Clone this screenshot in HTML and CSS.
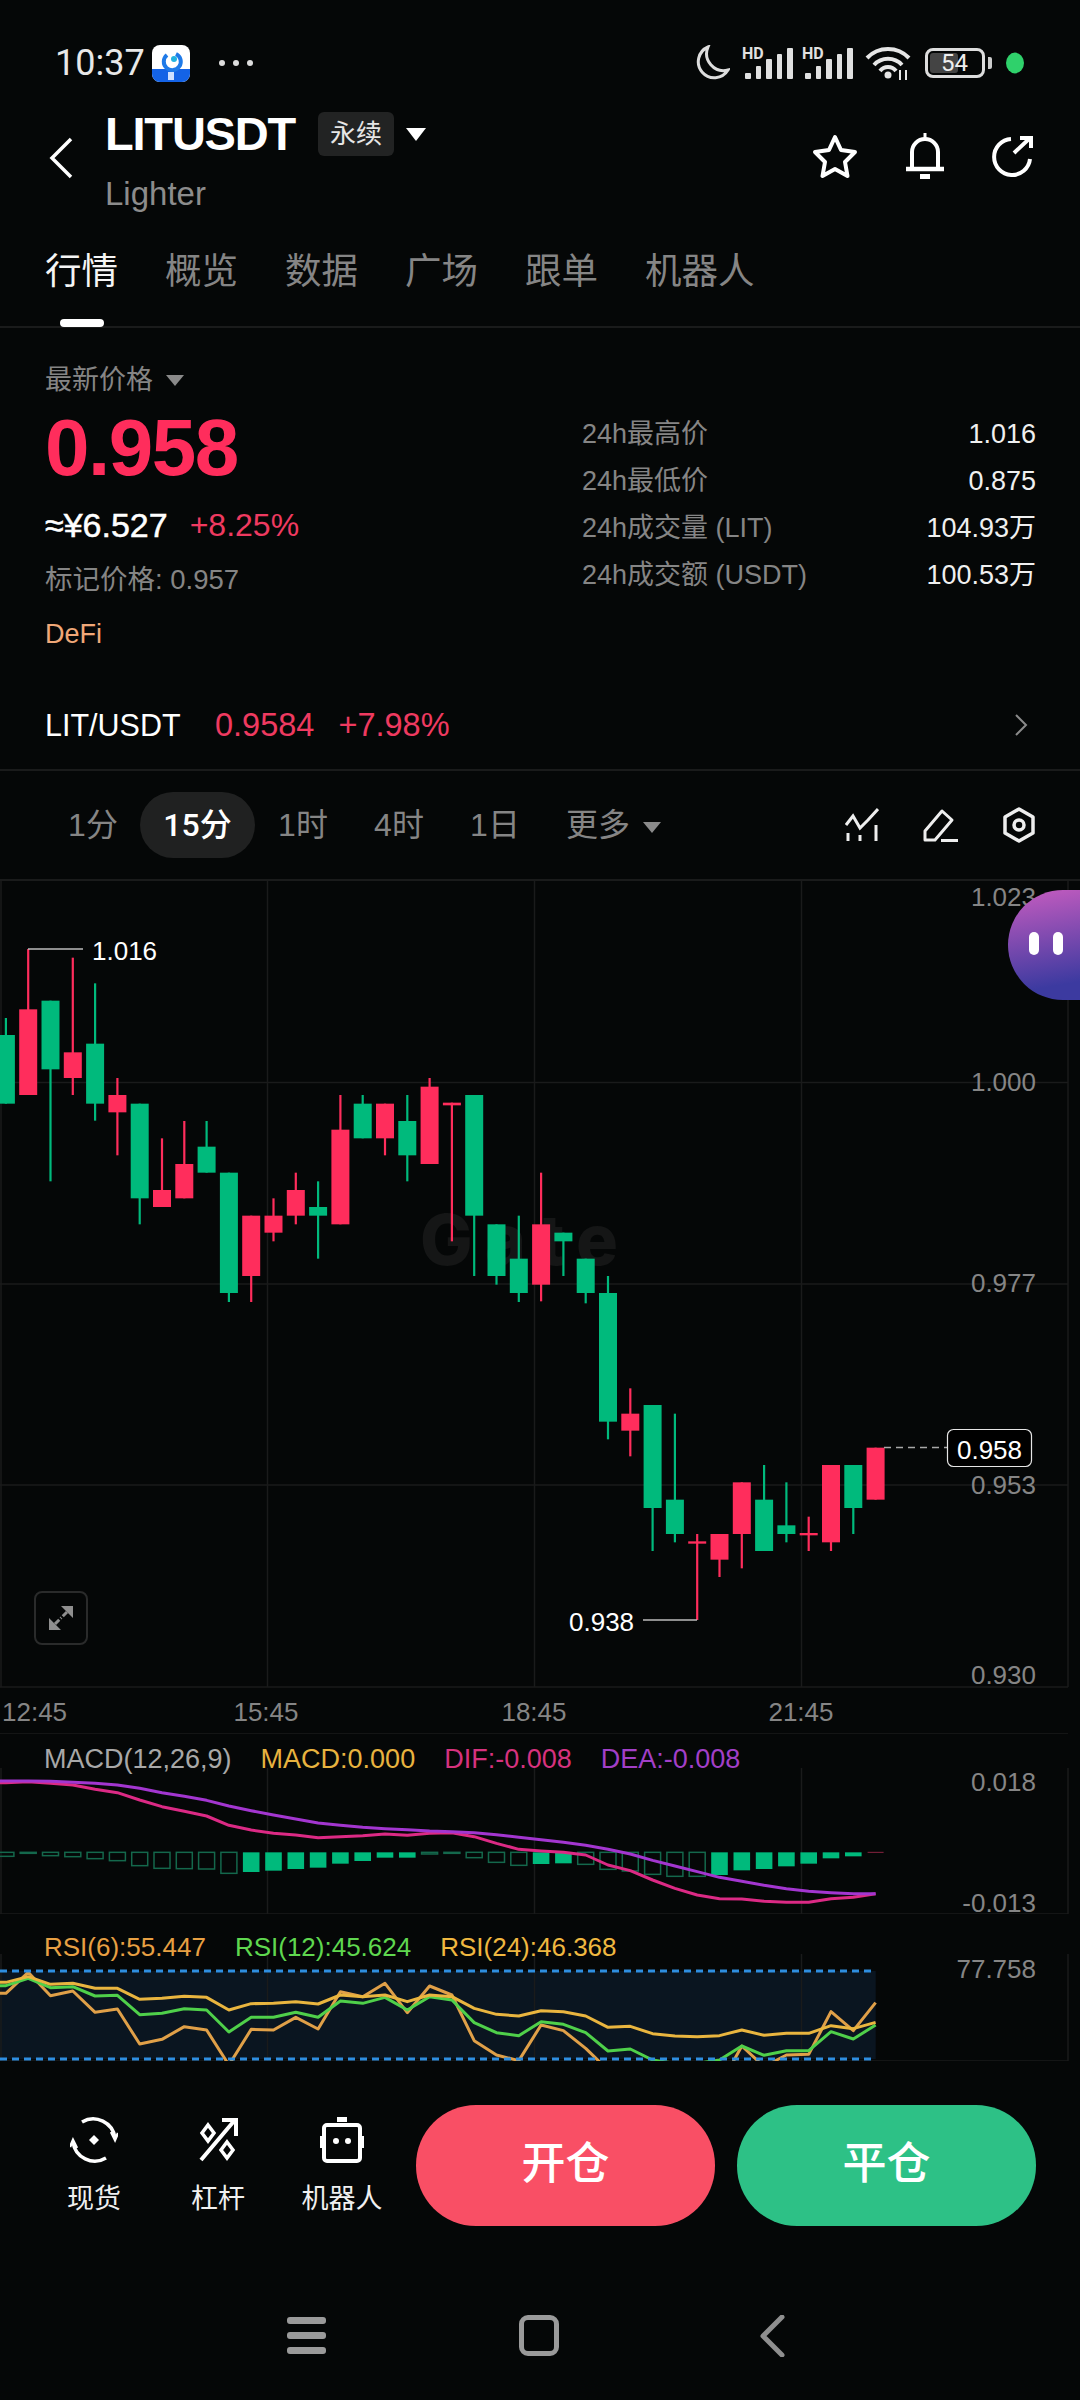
FILE: index.html
```html
<!DOCTYPE html>
<html>
<head>
	<title>LITUSDT</title>
	<meta name="viewport" content="width=device-width, initial-scale=1.0">
	<meta http-equiv="Content-Type" content="text/html; charset=UTF-8">
	<link rel="stylesheet" href="styles.css">
</head>
<body>
	<div id="status-bar">
		<span id="clock">10:37</span>
		<svg class="app-icon" width="38" height="37" viewBox="0 0 38 37">
			<rect width="38" height="37" rx="8" fill="#fff"/>
			<path d="M0 24H38V29a8 8 0 0 1-8 8H8a8 8 0 0 1-8-8Z" fill="#1463e6"/>
			<path d="M24 9a8.500 8.500 0 1 1-9 1" fill="none" stroke="#1f7ae8" stroke-width="4"/>
			<circle cx="22" cy="14" r="3" fill="#23b3e0"/>
			<rect x="16" y="27" width="6" height="8" fill="#cfe0ff"/>
		</svg>
		<span id="dots"><i></i><i></i><i></i></span>
		<span class="grow"></span>
		<svg class="moon" width="36" height="36" viewBox="0 0 36 36">
			<path d="M14 2A16 16 0 1 0 34 25 A17 17 0 0 1 14 2Z" fill="none" stroke="#ddd" stroke-width="3"/>
		</svg>
		<span class="signal">
			<span class="hd">HD</span>
			<i style="height:6px"></i><i style="height:13px"></i><i style="height:20px"></i><i style="height:25px"></i><i style="height:31px"></i>
		</span>
		<span class="signal">
			<span class="hd">HD</span>
			<i style="height:6px"></i><i style="height:13px"></i><i style="height:20px"></i><i style="height:25px"></i><i style="height:31px"></i>
		</span>
		<svg class="wifi" width="46" height="34" viewBox="0 0 46 34">
			<path d="M2 12A29 29 0 0 1 44 12M9 19A19 19 0 0 1 37 19M15 25A10 10 0 0 1 31 25" fill="none" stroke="#e6e6e6" stroke-width="4"/>
			<circle cx="23" cy="29" r="3.500" fill="#e6e6e6"/>
			<path d="M35 24V34M41 24V34" stroke="#e6e6e6" stroke-width="2"/>
		</svg>
		<span id="battery"><span id="battery-fill"></span><span id="battery-num">54</span></span>
		<span id="battery-cap"></span>
		<span id="green-dot"></span>
	</div>

	<div id="header">
		<svg class="back" width="26" height="42" viewBox="0 0 26 42">
			<path d="M23 2L4 21L23 40" fill="none" stroke="#fff" stroke-width="3.500"/>
		</svg>
		<div id="title-col">
			<div id="title-row">
				<span id="symbol">LITUSDT</span>
				<span id="tag">永续</span>
				<span class="caret caret-white"></span>
			</div>
			<div id="subtitle">Lighter</div>
		</div>
		<span class="grow"></span>
		<div id="actions">
			<svg width="46" height="46" viewBox="0 0 46 46">
				<path d="M23 4L29 17L43 19L33 29L35.500 43L23 36L10.500 43L13 29L3 19L17 17Z" fill="none" stroke="#fff" stroke-width="4" stroke-linejoin="round"/>
			</svg>
			<svg width="42" height="46" viewBox="0 0 42 46">
				<path d="M8 36V19a13 13 0 0 1 26 0V36" fill="none" stroke="#fff" stroke-width="4"/>
				<path d="M2 36H40" stroke="#fff" stroke-width="4.500"/>
				<path d="M21 0V5" stroke="#fff" stroke-width="3"/>
				<rect x="16" y="41" width="10" height="5" fill="#fff"/>
			</svg>
			<svg width="42" height="42" viewBox="0 0 42 42">
				<path d="M19 4A18 18 0 1 0 38 24" fill="none" stroke="#fff" stroke-width="4"/>
				<path d="M22 18L38 3M28 3H39V13" fill="none" stroke="#fff" stroke-width="4"/>
			</svg>
		</div>
	</div>

	<div id="tabs">
		<span class="tab tab-active">行情</span>
		<span class="tab">概览</span>
		<span class="tab">数据</span>
		<span class="tab">广场</span>
		<span class="tab">跟单</span>
		<span class="tab">机器人</span>
	</div>

	<div id="price-block">
		<div id="price-left">
			<div class="price-type">最新价格<span class="caret caret-grey"></span></div>
			<div id="last-price">0.958</div>
			<div id="cny-row"><span id="cny">≈¥6.527</span><span id="change">+8.25%</span></div>
			<div id="mark-price">标记价格: 0.957</div>
			<div id="sector">DeFi</div>
		</div>
		<div id="price-right">
			<div class="stat"><span>24h最高价</span><b>1.016</b></div>
			<div class="stat"><span>24h最低价</span><b>0.875</b></div>
			<div class="stat"><span>24h成交量 (LIT)</span><b>104.93万</b></div>
			<div class="stat"><span>24h成交额 (USDT)</span><b>100.53万</b></div>
		</div>
	</div>

	<div id="pair-row">
		<span id="pair">LIT/USDT</span>
		<span class="pair-num">0.9584</span>
		<span class="pair-num">+7.98%</span>
		<span class="grow"></span>
		<svg width="14" height="22" viewBox="0 0 14 22">
			<path d="M2 1L12 11L2 21" fill="none" stroke="#8a8a8a" stroke-width="2"/>
		</svg>
	</div>

	<div id="interval-row">
		<span class="interval">1分</span>
		<span class="interval interval-active">15分</span>
		<span class="interval">1时</span>
		<span class="interval">4时</span>
		<span class="interval">1日</span>
		<span class="interval interval-more">更多<span class="caret caret-grey"></span></span>
		<span class="grow"></span>
		<div id="tools">
			<svg width="34" height="34" viewBox="0 0 34 34">
				<path d="M1 17L8 8L15 20L23 12L33 1" fill="none" stroke="#eee" stroke-width="3"/>
				<path d="M3 25V33M15 27V33M31 17V33" stroke="#eee" stroke-width="3"/>
			</svg>
			<svg width="36" height="34" viewBox="0 0 36 34">
				<path d="M2 32V23L19 3L29 12L12 32Z" fill="none" stroke="#eee" stroke-width="3" stroke-linejoin="round"/>
				<path d="M18 32.500H35" stroke="#eee" stroke-width="3"/>
			</svg>
			<svg width="32" height="36" viewBox="0 0 32 36">
				<path d="M16 2L30 10V26L16 34L2 26V10Z" fill="none" stroke="#eee" stroke-width="3.500" stroke-linejoin="round"/>
				<circle cx="16" cy="18" r="5" fill="none" stroke="#eee" stroke-width="3.500"/>
			</svg>
		</div>
	</div>

	<div id="chart">
		<div id="main-pane" class="pane">
			<svg id="main-svg" class="pane-svg" width="1080" height="852" viewBox="0 881 1080 852"></svg>
			<div id="expand">
				<svg width="26" height="26" viewBox="0 0 26 26">
					<path d="M13 1H25V13Z M1 13V25H13Z" fill="#8f8f8f"/>
					<path d="M19 7L13 13M7 19L13 13" stroke="#8f8f8f" stroke-width="3" stroke-dasharray="6 2"/>
				</svg>
			</div>
			<div id="assistant"><i></i><i></i></div>
		</div>
		<div id="macd-pane" class="pane">
			<svg id="macd-svg" class="pane-svg" width="1080" height="181" viewBox="0 1733 1080 181"></svg>
			<div class="legend">
				<span class="c-grey">MACD(12,26,9)</span>
				<span class="c-yellow">MACD:0.000</span>
				<span class="c-pink">DIF:-0.008</span>
				<span class="c-purple">DEA:-0.008</span>
			</div>
		</div>
		<div id="rsi-pane" class="pane">
			<svg id="rsi-svg" class="pane-svg" width="1080" height="147" viewBox="0 1914 1080 147"></svg>
			<div class="legend">
				<span class="c-orange">RSI(6):55.447</span>
				<span class="c-green">RSI(12):45.624</span>
				<span class="c-gold">RSI(24):46.368</span>
			</div>
		</div>
	</div>

	<div id="action-bar">
		<div class="shortcut">
			<svg width="48" height="48" viewBox="0 0 48 48">
				<path d="M12 6A22 22 0 0 1 45 22M36 42A22 22 0 0 1 3 26" fill="none" stroke="#fff" stroke-width="3.500"/>
				<path d="M41 16L45 24L48 17M7 32L3 24L0 31" fill="none" stroke="#fff" stroke-width="2.500"/>
				<path d="M24 19L29 24L24 29L19 24Z" fill="#fff"/>
			</svg>
			<span>现货</span>
		</div>
		<div class="shortcut">
			<svg width="48" height="48" viewBox="0 0 48 48">
				<path d="M7 44L40 5M28 4H42V20" fill="none" stroke="#fff" stroke-width="4"/>
				<path d="M14 9L20 17L14 25L8 17Z M33 26L39 34L33 42L27 34Z" fill="none" stroke="#fff" stroke-width="3.500"/>
			</svg>
			<span>杠杆</span>
		</div>
		<div class="shortcut">
			<svg width="48" height="48" viewBox="0 0 48 48">
				<rect x="6" y="9" width="36" height="36" rx="3" fill="none" stroke="#fff" stroke-width="4"/>
				<rect x="19" y="1" width="10" height="5" fill="#fff"/>
				<rect x="2" y="20" width="4" height="12" fill="#fff"/>
				<rect x="42" y="20" width="4" height="12" fill="#fff"/>
				<circle cx="18" cy="25" r="3" fill="#fff"/>
				<circle cx="30" cy="25" r="3" fill="#fff"/>
			</svg>
			<span>机器人</span>
		</div>
		<div id="trade-buttons">
			<div class="trade-btn open-btn">开仓</div>
			<div class="trade-btn close-btn">平仓</div>
		</div>
	</div>

	<div id="nav-bar">
		<span id="nav-menu"><i></i><i></i><i></i></span>
		<span id="nav-home"></span>
		<svg width="26" height="42" viewBox="0 0 26 42">
			<path d="M23 2L4 21L23 40" fill="none" stroke="#8f8f8f" stroke-width="5" stroke-linecap="round" stroke-linejoin="round"/>
		</svg>
	</div>

	<script src="chart.js"></script>
</body>
</html>
```

FILE: styles.css
```css
* {
	box-sizing: border-box;
}
html, body {
	margin: 0;
	padding: 0;
}
body {
	width: 1080px;
	height: 2400px;
	overflow: hidden;
	background: #050707;
	color: #fff;
	font-family: "Liberation Sans", "Noto Sans CJK SC", sans-serif;
}
svg {
	display: block;
	flex: none;
}
.grow {
	flex: 1;
}

/* status bar */
#status-bar {
	height: 100px;
	padding: 26px 56px 0 55px;
	display: flex;
	align-items: center;
}
#clock {
	font-family: Roboto, sans-serif;
	font-size: 36px;
	color: #e8e8e8;
	width: 97px;
}
#dots {
	display: flex;
	gap: 8px;
	margin-left: 29px;
}
#dots i {
	width: 6px;
	height: 6px;
	border-radius: 50%;
	background: #ddd;
}
.moon {
	margin-right: 3px;
}
.signal {
	position: relative;
	width: 50px;
	height: 32px;
	margin-left: 10px;
	display: flex;
	align-items: flex-end;
	gap: 5px;
	padding-left: 2px;
}
.signal i {
	width: 6px;
	background: #e0e0e0;
	border-radius: 1px;
}
.hd {
	position: absolute;
	top: -3px;
	left: -1px;
	font-family: Roboto, sans-serif;
	font-size: 16px;
	font-weight: 700;
	color: #e0e0e0;
}
.wifi {
	margin-left: 12px;
}
#battery {
	position: relative;
	width: 60px;
	height: 30px;
	margin-left: 14px;
	border: 3px solid #ddd;
	border-radius: 8px;
}
#battery-fill {
	position: absolute;
	top: 2px;
	bottom: 2px;
	left: 2px;
	width: 28px;
	background: #444;
	border-radius: 3px;
}
#battery-num {
	position: absolute;
	top: -3px;
	left: 13px;
	font-family: Roboto, sans-serif;
	font-size: 24px;
	line-height: 30px;
	color: #eee;
}
#battery-cap {
	width: 4px;
	height: 12px;
	margin-left: 3px;
	background: #ccc;
	border-radius: 0 2px 2px 0;
}
#green-dot {
	width: 18px;
	height: 26px;
	margin-left: 14px;
	border-radius: 50%;
	background: #2fd16b;
	transform: scaleY(0.8);
}

/* header */
#header {
	height: 122px;
	padding: 12px 46px 0 48px;
	display: flex;
	position: relative;
}
.back {
	margin-top: 25px;
}
#title-col {
	margin-left: 31px;
}
#title-row {
	height: 44px;
	display: flex;
	align-items: center;
}
#symbol {
	font-size: 47px;
	font-weight: 700;
	letter-spacing: -1.200px;
	line-height: 44px;
}
#tag {
	margin-left: 23px;
	width: 76px;
	height: 44px;
	background: #222323;
	border-radius: 6px;
	font-size: 26px;
	line-height: 44px;
	text-align: center;
	color: #e6e6e6;
}
.caret {
	display: inline-block;
	width: 0;
	height: 0;
	border-left: 9px solid transparent;
	border-right: 9px solid transparent;
}
.caret-white {
	margin-left: 12px;
	border-left-width: 10px;
	border-right-width: 10px;
	border-top: 13px solid #fff;
}
.caret-grey {
	margin-left: 13px;
	border-top: 11px solid #8a8a8a;
	vertical-align: 3px;
}
#subtitle {
	margin-top: 18px;
	font-size: 33px;
	line-height: 40px;
	color: #8c8c8c;
}
#actions {
	display: flex;
	align-items: center;
	gap: 46px;
	height: 46px;
	margin-top: 21px;
}

/* tabs */
#tabs {
	height: 106px;
	padding: 24px 0 0 45px;
	display: flex;
	gap: 47px;
	border-bottom: 2px solid #1a1b1b;
}
.tab {
	position: relative;
	font-size: 36.500px;
	line-height: 52px;
	height: 52px;
	color: #858585;
}
.tab-active {
	color: #f5f5f5;
}
.tab-active::after {
	content: "";
	position: absolute;
	left: 15px;
	top: 73px;
	width: 44px;
	height: 8px;
	border-radius: 4px;
	background: #fff;
}

/* price block */
#price-block {
	height: 353px;
	padding: 0 44px 0 45px;
	display: flex;
}
#price-left {
	width: 537px;
	padding-top: 33px;
}
.price-type {
	font-size: 27px;
	line-height: 38px;
	color: #858585;
}
#last-price {
	margin-top: 9px;
	font-size: 80px;
	line-height: 80px;
	font-weight: 700;
	letter-spacing: -1.500px;
	color: #ff2d5c;
}
#cny-row {
	margin-top: 17px;
	height: 40px;
	line-height: 40px;
	font-size: 32px;
	display: flex;
	gap: 22px;
}
#cny {
	font-size: 34px;
	-webkit-text-stroke: 0.5px #fff;
}
#change {
	color: #ef3a60;
}
#mark-price {
	margin-top: 15px;
	font-size: 27.500px;
	line-height: 40px;
	color: #858585;
}
#sector {
	margin-top: 14px;
	font-size: 27px;
	line-height: 40px;
	color: #f0a878;
}
#price-right {
	flex: 1;
	padding-top: 83px;
}
.stat {
	height: 47px;
	line-height: 47px;
	font-size: 27px;
	display: flex;
	justify-content: space-between;
	color: #858585;
}
.stat b {
	font-weight: 400;
	color: #f0f0f0;
}

/* pair row */
#pair-row {
	height: 90px;
	padding: 0 52px 0 45px;
	display: flex;
	align-items: center;
	font-size: 30.500px;
	border-bottom: 2px solid #1a1b1b;
}
#pair {
	width: 170px;
}
.pair-num {
	font-size: 32.500px;
	color: #ef3a60;
	margin-right: 24px;
}

/* interval row */
#interval-row {
	height: 110px;
	padding: 0 45px 0 0;
	display: flex;
	align-items: center;
	border-bottom: 2px solid #1a1b1b;
}
.interval {
	width: 96px;
	height: 66px;
	line-height: 66px;
	text-align: center;
	font-size: 32px;
	color: #858585;
}
.interval:first-child {
	width: 94px;
	margin-left: 46px;
}
.interval-active {
	width: 115px;
	font-family: Roboto, "Noto Sans CJK SC", sans-serif;
	color: #fff;
	font-weight: 500;
	background: #202121;
	border-radius: 33px;
}
.interval-more {
	width: auto;
	margin-left: 23px;
	white-space: nowrap;
}
#tools {
	display: flex;
	align-items: center;
	gap: 44px;
}

/* chart */
#chart {
	height: 1180px;
}
.pane {
	position: relative;
}
#main-pane {
	height: 852px;
}
#macd-pane {
	height: 181px;
}
#rsi-pane {
	height: 147px;
}
.pane-svg {
	position: absolute;
	top: 0;
	left: 0;
}
.pane-svg text {
	font-family: "Liberation Sans", sans-serif;
	font-size: 26px;
	fill: #858585;
}
.pane-svg .num-white {
	fill: #fff;
}
.pane-svg .watermark {
	font-family: Inter, sans-serif;
	font-size: 70px;
	font-weight: 800;
	letter-spacing: 12px;
	fill: #151616;
}
.legend {
	position: absolute;
	top: 13px;
	left: 44px;
	display: flex;
	gap: 29px;
	font-size: 27px;
	line-height: 26px;
}
#rsi-pane .legend {
	top: 20px;
	font-size: 26px;
}
.c-grey { color: #a8a8a8; }
.c-yellow { color: #e8b33f; }
.c-pink { color: #d6327e; }
.c-purple { color: #a23fc8; }
.c-orange { color: #e8a043; }
.c-green { color: #5fd84f; }
.c-gold { color: #f0b840; }
#expand {
	position: absolute;
	left: 34px;
	top: 710px;
	width: 54px;
	height: 54px;
	border: 2px solid #2a2b2b;
	border-radius: 8px;
	display: flex;
	align-items: center;
	justify-content: center;
}
#assistant {
	position: absolute;
	right: 0;
	top: 9px;
	width: 72px;
	height: 110px;
	border-radius: 55px 0 0 55px;
	background: linear-gradient(170deg, #c65cc0, #3c3aa0 85%);
	display: flex;
	gap: 14px;
	padding: 42px 0 0 21px;
}
#assistant i {
	width: 10px;
	height: 23px;
	border-radius: 5px;
	background: #fff;
}

/* bottom action bar */
#action-bar {
	height: 180px;
	padding: 44px 44px 0 32px;
	display: flex;
}
.shortcut {
	display: flex;
	flex-direction: column;
	align-items: center;
	width: 124px;
	font-size: 27px;
	padding-top: 11px;
}
.shortcut span {
	margin-top: 16px;
	line-height: 38px;
	color: #f0f0f0;
}
#trade-buttons {
	display: flex;
	gap: 22px;
	margin-left: 12px;
}
.trade-btn {
	width: 299px;
	height: 121px;
	border-radius: 60px;
	line-height: 118px;
	text-align: center;
	font-size: 44px;
	font-weight: 500;
}
.open-btn {
	background: #f94f65;
}
.close-btn {
	background: #2dc186;
}

/* nav bar */
#nav-bar {
	height: 159px;
	padding: 74px 0 0 287px;
	display: flex;
	align-items: flex-start;
}
#nav-menu {
	display: flex;
	flex-direction: column;
	gap: 8px;
	width: 39px;
	margin-top: 2px;
}
#nav-menu i {
	height: 7px;
	border-radius: 3px;
	background: #9a9a9a;
}
#nav-home {
	width: 40px;
	height: 41px;
	margin-left: 193px;
	border: 5px solid #9a9a9a;
	border-radius: 9px;
}
#nav-bar svg {
	margin-left: 200px;
}
```

FILE: chart.js
```js
// positions below were measured in a 3x crop, so y = 880 + p / 3
function py(p) {
	return 880 + p / 3;
}
function cx(i) {
	return 5.9 + 22.3 * i;
}

const GREEN = "#00ba7c";
const RED = "#ff2d5c";

// [high, bodyTop, bodyBottom, low, colour]
const CANDLES = [
	[414, 465, 671, 671, GREEN], [207, 388, 645, 645, RED], [362, 362, 568, 904, GREEN], [233, 517, 594, 645, RED],
	[310, 491, 671, 722, GREEN], [594, 645, 697, 826, RED], [671, 671, 955, 1033, GREEN], [775, 930, 981, 981, RED],
	[723, 852, 955, 955, RED], [723, 800, 878, 878, GREEN], [878, 878, 1239, 1266, GREEN], [1007, 1007, 1188, 1266, RED],
	[955, 1007, 1058, 1084, RED], [878, 930, 1007, 1033, RED], [904, 981, 1007, 1136, GREEN], [645, 749, 1033, 1033, RED],
	[645, 671, 775, 775, GREEN], [671, 671, 775, 826, RED], [645, 723, 826, 904, GREEN], [594, 620, 852, 852, RED],
	[668, 668, 676, 1084, RED], [645, 645, 1007, 1188, GREEN], [1033, 1033, 1188, 1214, GREEN], [1007, 1136, 1239, 1266, GREEN],
	[878, 1033, 1214, 1264, RED], [1058, 1058, 1084, 1188, GREEN], [1136, 1136, 1239, 1270, GREEN], [1188, 1239, 1625, 1678, GREEN],
	[1525, 1601, 1652, 1729, RED], [1575, 1575, 1884, 2013, GREEN], [1601, 1859, 1962, 1987, GREEN], [1962, 1984, 1991, 2220, RED],
	[1962, 1962, 2039, 2091, RED], [1807, 1807, 1962, 2065, RED], [1755, 1859, 2013, 2013, GREEN], [1807, 1936, 1962, 1987, GREEN],
	[1910, 1959, 1966, 2013, RED], [1755, 1755, 1987, 2013, RED], [1755, 1755, 1884, 1962, GREEN], [1703, 1703, 1859, 1859, RED]
];

// macd panel, y = 1720 + p / 3
function my(p) {
	return 1720 + p / 3;
}
const HIST = [409, 400, 407, 410, 416, 422, 437, 445, 446, 447, 460, 456, 452, 447, 443, 431, 423, 413, 413, 402, 400, 413, 427, 436, 432, 430, 433, 448, 453, 463, 469, 469, 465, 451, 447, 439, 431, 415, 409];
const HIST_FILLED = [11, 12, 13, 14, 15, 16, 17, 18, 24, 25, 32, 33, 34, 35, 36, 37, 38];
const DEA = [183, 183, 184, 187, 190, 195, 205, 218, 229, 241, 258, 272, 285, 297, 309, 316, 322, 326, 329, 333, 335, 338, 344, 352, 359, 367, 376, 388, 402, 421, 438, 455, 472, 484, 496, 506, 514, 518, 521, 521];
const DIF = [188, 185, 190, 195, 208, 218, 240, 260, 274, 288, 316, 330, 340, 345, 353, 350, 347, 342, 346, 340, 338, 350, 370, 388, 393, 397, 405, 435, 452, 480, 505, 525, 536, 537, 544, 547, 547, 536, 532, 521];
const RSI6 = [820, 757, 827, 813, 877, 867, 972, 958, 920, 930, 1035, 928, 930, 892, 927, 815, 830, 790, 878, 798, 825, 962, 1005, 1022, 915, 932, 985, 1050, 1040, 1100, 1120, 1120, 1100, 978, 1040, 1005, 1003, 875, 932, 848];
const RSI12 = [797, 775, 803, 800, 828, 826, 884, 880, 866, 870, 936, 892, 892, 877, 892, 843, 850, 832, 870, 830, 840, 908, 938, 947, 905, 913, 938, 993, 987, 1020, 1030, 1030, 1020, 978, 1006, 992, 992, 935, 957, 915];
const RSI24 = [787, 770, 793, 790, 805, 805, 838, 835, 829, 832, 870, 851, 850, 845, 852, 825, 830, 825, 845, 825, 830, 865, 883, 888, 872, 875, 888, 922, 919, 941, 948, 950, 947, 930, 946, 940, 940, 917, 926, 907];

function rect(x, y, w, h, fill) {
	return '<rect x="' + x + '" y="' + y + '" width="' + w + '" height="' + h + '" fill="' + fill + '"/>';
}
function line(x1, y1, x2, y2, stroke, w, extra) {
	return '<line x1="' + x1 + '" y1="' + y1 + '" x2="' + x2 + '" y2="' + y2 + '" stroke="' + stroke + '" stroke-width="' + w + '" ' + (extra || '') + '/>';
}
function label(x, y, str, anchor, cls) {
	return '<text x="' + x + '" y="' + (y + 9.500) + '" text-anchor="' + anchor + '"' + (cls ? ' class="' + cls + '"' : '') + '>' + str + '</text>';
}
function poly(values, toY, startX, stroke, w) {
	let pts = [startX + "," + toY(values[0])];
	for(let k = 0; k < values.length; ++k) {
		pts.push(cx(k) + "," + toY(values[k]));
	}
	return '<polyline points="' + pts.join(" ") + '" fill="none" stroke="' + stroke + '" stroke-width="' + w + '" stroke-linejoin="round"/>';
}
function verticals(y1, y2) {
	const GRID = "#1a1b1b";
	let s = "";
	const xs = [1, 267.500, 534.500, 801.500, 1068];
	for(let k = 0; k < xs.length; ++k) {
		s += line(xs[k], y1, xs[k], y2, GRID, 1.500);
	}
	return s;
}

function drawMain() {
	const GRID = "#1a1b1b";
	let s = verticals(881, 1687);
	const hs = [1082.500, 1284, 1485, 1687];
	for(let k = 0; k < hs.length; ++k) {
		s += line(0, hs[k], 1068, hs[k], GRID, 1.500);
	}
	s += '<text x="420" y="1265" class="watermark">Gate</text>';

	for(let k = 0; k < CANDLES.length; ++k) {
		const c = CANDLES[k];
		const x = cx(k);
		s += rect(x - 1.100, py(c[0]), 2.200, py(c[3]) - py(c[0]), c[4]);
		s += rect(x - 9, py(c[1]), 18, py(c[2]) - py(c[1]), c[4]);
	}

	s += label(1036, 896, "1.023", "end");
	s += label(1036, 1081.500, "1.000", "end");
	s += label(1036, 1282, "0.977", "end");
	s += label(1036, 1484, "0.953", "end");
	s += label(1036, 1674, "0.930", "end");

	s += line(28, 949, 83, 949, "#bdbdbd", 1.500);
	s += label(92, 950, "1.016", "start", "num-white");
	s += line(643, 1620, 697, 1620, "#bdbdbd", 1.500);
	s += label(569, 1621, "0.938", "start", "num-white");

	s += line(884, 1447.500, 947, 1447.500, "#a8a8a8", 1.500, 'stroke-dasharray="7 5"');
	s += '<rect x="947.500" y="1429.500" width="84" height="37" rx="6" fill="#000" stroke="#e6e6e6" stroke-width="1.200"/>';
	s += label(989.500, 1449, "0.958", "middle", "num-white");

	s += label(2, 1711, "12:45", "start");
	s += label(266, 1711, "15:45", "middle");
	s += label(534, 1711, "18:45", "middle");
	s += label(801, 1711, "21:45", "middle");
	document.getElementById("main-svg").innerHTML = s;
}

function drawMacd() {
	let s = verticals(1768, 1914);
	s += line(0, 1733, 1068, 1733, "#1a1b1b", 1.500);
	s += line(0, 1914, 1068, 1914, "#1a1b1b", 1.500);
	for(let k = 0; k < HIST.length; ++k) {
		const top = my(397);
		const h = (HIST[k] - 397) / 3;
		if(HIST_FILLED.indexOf(k) >= 0) {
			s += rect(cx(k) - 8.300, top, 16.600, h, GREEN);
		} else {
			s += '<rect x="' + (cx(k) - 8) + '" y="' + top + '" width="16" height="' + h + '" fill="none" stroke="#14684c" stroke-width="1.500"/>';
		}
	}
	s += line(cx(39) - 8, my(397), cx(39) + 8, my(397), "#8a2440", 1);
	s += poly(DIF, my, 0, "#dc2a85", 3);
	s += poly(DEA, my, 0, "#a336d0", 3);
	s += label(1036, 1781, "0.018", "end");
	s += label(1036, 1902, "-0.013", "end");
	document.getElementById("macd-svg").innerHTML = s;
}

function drawRsi() {
	let s = rect(0, 1971, 875.700, 88, "#0a1520");
	s += verticals(1954, 2061);
	s += line(0, 2061, 1068, 2061, "#1a1b1b", 1.500);
	s += '<svg x="0" y="1914" width="1080" height="147" viewBox="0 1914 1080 147">';
	s += poly(RSI6, my, 0, "#e0a048", 3);
	s += poly(RSI12, my, 0, "#4fd04a", 3);
	s += poly(RSI24, my, 0, "#e9b53f", 3);
	s += '</svg>';
	s += line(0, 1971, 875.700, 1971, "#2e8ee0", 3, 'stroke-dasharray="7 5"');
	s += line(0, 2059, 875.700, 2059, "#2e8ee0", 3, 'stroke-dasharray="7 5"');
	s += label(1036, 1968, "77.758", "end");
	document.getElementById("rsi-svg").innerHTML = s;
}

drawMain();
drawMacd();
drawRsi();
```
